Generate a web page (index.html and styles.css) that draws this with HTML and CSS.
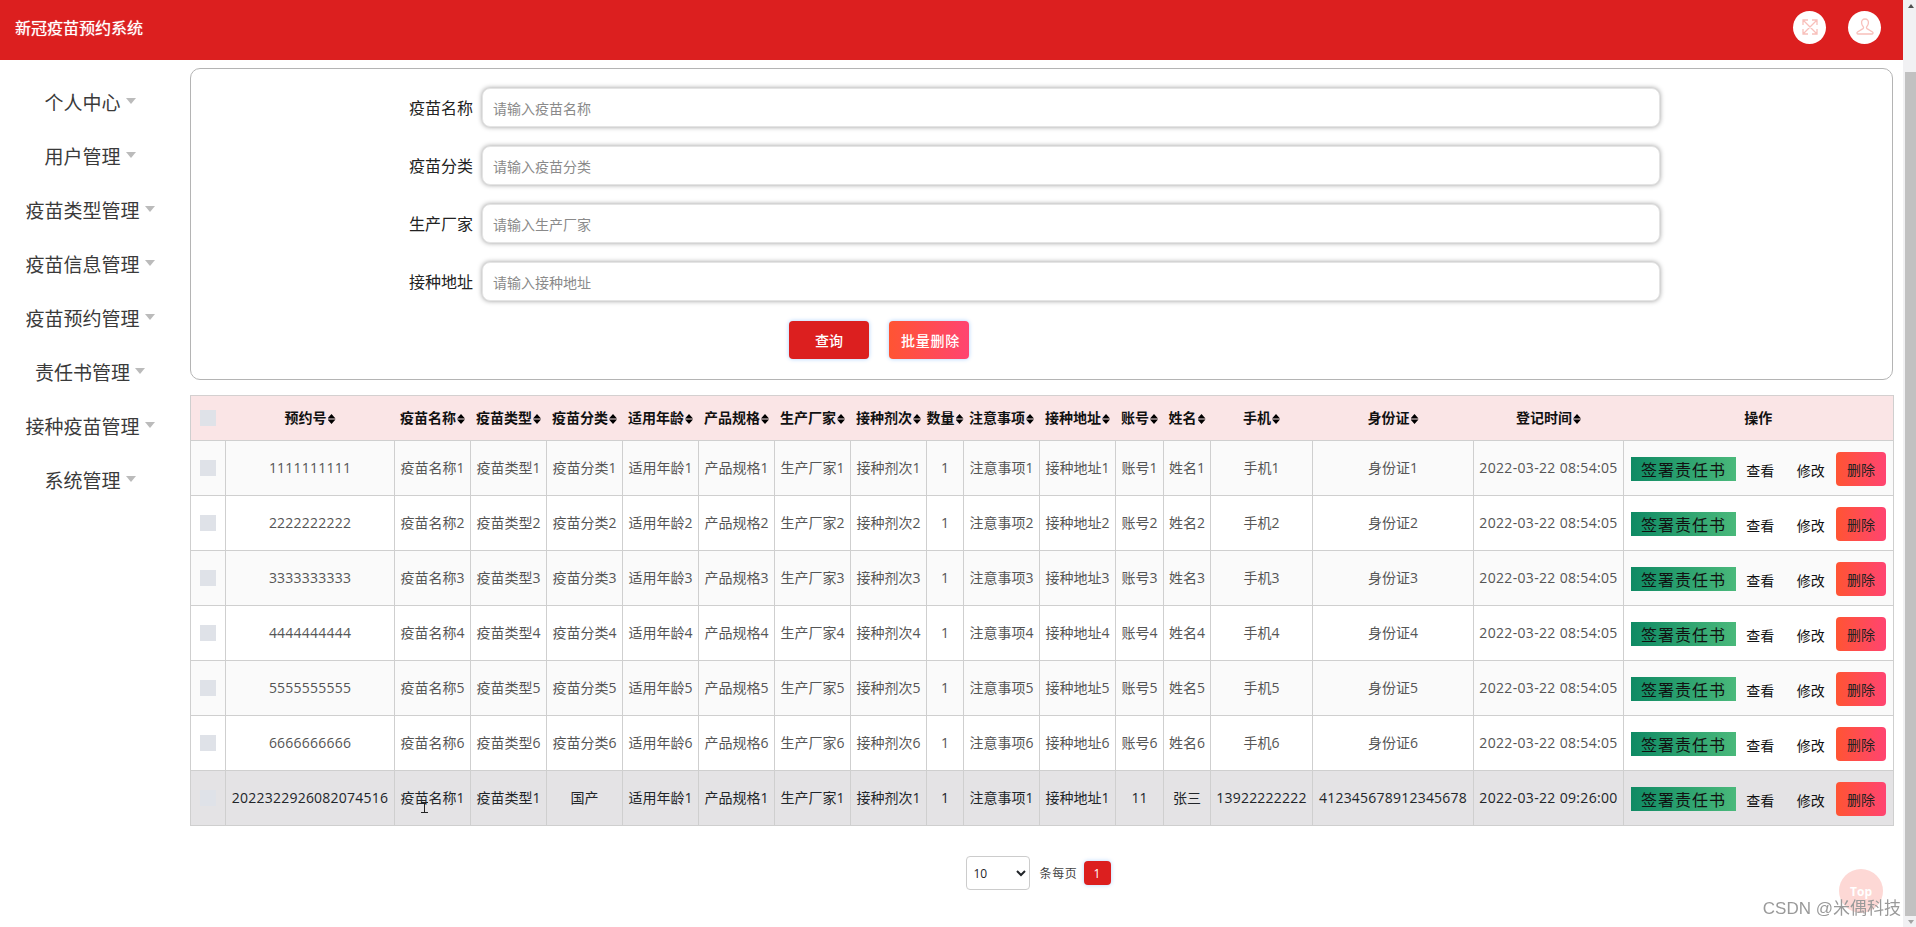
FILE: index.html
```html
<!DOCTYPE html>
<html lang="zh-CN">
<head>
<meta charset="utf-8">
<title>新冠疫苗预约系统</title>
<link rel="stylesheet" href="styles.css">
</head>
<body>
<div class="page">
  <div class="app">
    <header class="topbar">
      <div class="brand">新冠疫苗预约系统</div>
      <div class="top-actions">
        <span class="round-icon">
          <svg viewBox="0 0 16 16" width="16" height="16"><path d="M1 1l14 14M15 1L1 15M1 6V1h5M10 1h5v5M15 10v5h-5M6 15H1v-5"/></svg>
        </span>
        <span class="round-icon">
          <svg viewBox="0 0 18 18" width="18" height="18"><path d="M9 1c-2.4 0-3.6 1.8-3.4 4 .1 1.7.9 3 1.7 3.8.4.5.3 1.4-.3 1.8L1.5 14c-.9.6-.6 2 .6 2h13.8c1.2 0 1.500-1.400.6-2l-5.500-3.400c-.6-.4-.7-1.300-.3-1.800.8-.8 1.600-2.100 1.700-3.800C12.600 2.800 11.400 1 9 1z"/></svg>
        </span>
      </div>
    </header>
    <div class="layout">
      <nav class="sidebar">
        <div class="menu-item">个人中心</div>
        <div class="menu-item">用户管理</div>
        <div class="menu-item">疫苗类型管理</div>
        <div class="menu-item">疫苗信息管理</div>
        <div class="menu-item">疫苗预约管理</div>
        <div class="menu-item">责任书管理</div>
        <div class="menu-item">接种疫苗管理</div>
        <div class="menu-item">系统管理</div>
      </nav>
      <main class="main">
        <section class="search-box">
          <div class="form-row"><label class="form-label">疫苗名称</label><input class="form-input" placeholder="请输入疫苗名称"></div>
          <div class="form-row"><label class="form-label">疫苗分类</label><input class="form-input" placeholder="请输入疫苗分类"></div>
          <div class="form-row"><label class="form-label">生产厂家</label><input class="form-input" placeholder="请输入生产厂家"></div>
          <div class="form-row"><label class="form-label">接种地址</label><input class="form-input" placeholder="请输入接种地址"></div>
          <div class="form-buttons">
            <button class="btn-search">查询</button>
            <button class="btn-batch">批量删除</button>
          </div>
        </section>
        <div class="table-wrap">
          <table class="data-table">
            <colgroup>
              <col class="c-check"><col class="c-no"><col class="c-std"><col class="c-std"><col class="c-std"><col class="c-std"><col class="c-std"><col class="c-std"><col class="c-std"><col class="c-qty"><col class="c-std"><col class="c-std"><col class="c-acct"><col class="c-name"><col class="c-phone"><col class="c-id"><col class="c-time"><col class="c-ops">
            </colgroup>
            <thead>
              <tr>
                <th><input type="checkbox" class="check"></th>
                <th><span class="sort">预约号</span></th>
                <th><span class="sort">疫苗名称</span></th>
                <th><span class="sort">疫苗类型</span></th>
                <th><span class="sort">疫苗分类</span></th>
                <th><span class="sort">适用年龄</span></th>
                <th><span class="sort">产品规格</span></th>
                <th><span class="sort">生产厂家</span></th>
                <th><span class="sort">接种剂次</span></th>
                <th><span class="sort">数量</span></th>
                <th><span class="sort">注意事项</span></th>
                <th><span class="sort">接种地址</span></th>
                <th><span class="sort">账号</span></th>
                <th><span class="sort">姓名</span></th>
                <th><span class="sort">手机</span></th>
                <th><span class="sort">身份证</span></th>
                <th><span class="sort">登记时间</span></th>
                <th>操作</th>
              </tr>
            </thead>
            <tbody>
              <tr>
                <td><input type="checkbox" class="check"></td>
                <td class="num">1111111111</td><td>疫苗名称1</td><td>疫苗类型1</td><td>疫苗分类1</td><td>适用年龄1</td><td>产品规格1</td><td>生产厂家1</td><td>接种剂次1</td><td>1</td><td>注意事项1</td><td>接种地址1</td><td>账号1</td><td>姓名1</td><td>手机1</td><td>身份证1</td><td class="date">2022-03-22 08:54:05</td>
                <td class="ops-cell"><div class="ops"><button class="btn-sign">签署责任书</button><button class="btn-link">查看</button><button class="btn-link">修改</button><button class="btn-del">删除</button></div></td>
              </tr>
              <tr>
                <td><input type="checkbox" class="check"></td>
                <td class="num">2222222222</td><td>疫苗名称2</td><td>疫苗类型2</td><td>疫苗分类2</td><td>适用年龄2</td><td>产品规格2</td><td>生产厂家2</td><td>接种剂次2</td><td>1</td><td>注意事项2</td><td>接种地址2</td><td>账号2</td><td>姓名2</td><td>手机2</td><td>身份证2</td><td class="date">2022-03-22 08:54:05</td>
                <td class="ops-cell"><div class="ops"><button class="btn-sign">签署责任书</button><button class="btn-link">查看</button><button class="btn-link">修改</button><button class="btn-del">删除</button></div></td>
              </tr>
              <tr>
                <td><input type="checkbox" class="check"></td>
                <td class="num">3333333333</td><td>疫苗名称3</td><td>疫苗类型3</td><td>疫苗分类3</td><td>适用年龄3</td><td>产品规格3</td><td>生产厂家3</td><td>接种剂次3</td><td>1</td><td>注意事项3</td><td>接种地址3</td><td>账号3</td><td>姓名3</td><td>手机3</td><td>身份证3</td><td class="date">2022-03-22 08:54:05</td>
                <td class="ops-cell"><div class="ops"><button class="btn-sign">签署责任书</button><button class="btn-link">查看</button><button class="btn-link">修改</button><button class="btn-del">删除</button></div></td>
              </tr>
              <tr>
                <td><input type="checkbox" class="check"></td>
                <td class="num">4444444444</td><td>疫苗名称4</td><td>疫苗类型4</td><td>疫苗分类4</td><td>适用年龄4</td><td>产品规格4</td><td>生产厂家4</td><td>接种剂次4</td><td>1</td><td>注意事项4</td><td>接种地址4</td><td>账号4</td><td>姓名4</td><td>手机4</td><td>身份证4</td><td class="date">2022-03-22 08:54:05</td>
                <td class="ops-cell"><div class="ops"><button class="btn-sign">签署责任书</button><button class="btn-link">查看</button><button class="btn-link">修改</button><button class="btn-del">删除</button></div></td>
              </tr>
              <tr>
                <td><input type="checkbox" class="check"></td>
                <td class="num">5555555555</td><td>疫苗名称5</td><td>疫苗类型5</td><td>疫苗分类5</td><td>适用年龄5</td><td>产品规格5</td><td>生产厂家5</td><td>接种剂次5</td><td>1</td><td>注意事项5</td><td>接种地址5</td><td>账号5</td><td>姓名5</td><td>手机5</td><td>身份证5</td><td class="date">2022-03-22 08:54:05</td>
                <td class="ops-cell"><div class="ops"><button class="btn-sign">签署责任书</button><button class="btn-link">查看</button><button class="btn-link">修改</button><button class="btn-del">删除</button></div></td>
              </tr>
              <tr>
                <td><input type="checkbox" class="check"></td>
                <td class="num">6666666666</td><td>疫苗名称6</td><td>疫苗类型6</td><td>疫苗分类6</td><td>适用年龄6</td><td>产品规格6</td><td>生产厂家6</td><td>接种剂次6</td><td>1</td><td>注意事项6</td><td>接种地址6</td><td>账号6</td><td>姓名6</td><td>手机6</td><td>身份证6</td><td class="date">2022-03-22 08:54:05</td>
                <td class="ops-cell"><div class="ops"><button class="btn-sign">签署责任书</button><button class="btn-link">查看</button><button class="btn-link">修改</button><button class="btn-del">删除</button></div></td>
              </tr>
              <tr class="row-hover">
                <td><input type="checkbox" class="check"></td>
                <td class="num">2022322926082074516</td><td>疫苗名称1</td><td>疫苗类型1</td><td>国产</td><td>适用年龄1</td><td>产品规格1</td><td>生产厂家1</td><td>接种剂次1</td><td>1</td><td>注意事项1</td><td>接种地址1</td><td>11</td><td>张三</td><td class="num">13922222222</td><td class="num">412345678912345678</td><td class="date">2022-03-22 09:26:00</td>
                <td class="ops-cell"><div class="ops"><button class="btn-sign">签署责任书</button><button class="btn-link">查看</button><button class="btn-link">修改</button><button class="btn-del">删除</button></div></td>
              </tr>
            </tbody>
          </table>
        </div>
        <div class="pager">
          <select class="page-size"><option>10</option><option>20</option><option>50</option></select>
          <span class="page-text">条每页</span>
          <button class="page-num">1</button>
        </div>
      </main>
    </div>
  </div>
  <div class="scrollbar">
    <div class="sb-arrow"><span class="tri-up"></span></div>
    <div class="sb-gap"></div>
    <div class="sb-thumb"></div>
    <div class="sb-arrow"><span class="tri-down"></span></div>
  </div>
</div>
<svg class="cursor" viewBox="0 0 7 11" width="7" height="11"><path d="M0 .5h7M0 10.500h7M3.500.5v10"/></svg>
<div class="to-top">Top</div>
<div class="watermark">CSDN @米偶科技</div>
</body>
</html>
```
FILE: styles.css
```css
* { box-sizing: border-box; }
html, body { height: 100%; }
body {
  margin: 0;
  overflow: hidden;
  background: #fff;
  color: #212529;
  font-family: "Open Sans", "Noto Sans CJK SC", sans-serif;
  font-size: 14px;
}
button, input, select { font-family: inherit; }

.page { display: flex; height: 927px; }
.app { flex: 1; min-width: 0; display: flex; flex-direction: column; }

.topbar {
  height: 60px;
  flex: none;
  background: #dc1f1f;
  display: flex;
  align-items: center;
  justify-content: space-between;
  padding: 0 22px 6px 15px;
}
.brand { color: #fff; font-size: 16px; text-shadow: 0 0 1px rgba(255, 255, 255, .8); }
.top-actions { display: flex; gap: 22px; }
.round-icon {
  width: 33px;
  height: 33px;
  border-radius: 50%;
  background: #fff;
  display: flex;
  align-items: center;
  justify-content: center;
}
.round-icon svg { fill: none; stroke: #f8c0bb; stroke-width: 1.3; }

.layout { flex: 1; display: flex; min-height: 0; }
.sidebar { width: 180px; flex: none; padding-top: 15px; }
.menu-item {
  height: 54px;
  display: flex;
  align-items: center;
  justify-content: center;
  padding-bottom: 1px;
  font-size: 19px;
  color: #3a3a3a;
}
.menu-item::after {
  content: "";
  margin-left: 5px;
  margin-top: -2px;
  border-style: solid;
  border-width: 6px 5.5px 0;
  border-color: #bbb transparent transparent;
}

.main { flex: 1; min-width: 0; margin: 8px 10px 0; }
.search-box {
  height: 312px;
  border: 1px solid #b4b4b4;
  border-radius: 10px;
  padding: 19px 232px 0 218px;
  display: flex;
  flex-direction: column;
  gap: 19px;
}
.form-row { display: flex; align-items: center; gap: 9px; }
.form-label { width: 64px; flex: none; font-size: 16px; color: #222; white-space: nowrap; padding-bottom: 2px; }
.form-input {
  flex: 1;
  height: 39px;
  border: 1px solid #e4e4e4;
  border-radius: 8px;
  padding: 2px 10px 0;
  font-size: 14px;
  outline: none;
  box-shadow: 0 0 5px rgba(0, 0, 0, .4);
}
.form-input::placeholder { color: #8a8a8a; opacity: 1; }
.form-buttons { display: flex; gap: 20px; margin: 1px 0 0 380px; }
.btn-search, .btn-batch {
  width: 80px;
  height: 38px;
  border: 0;
  border-radius: 4px;
  color: #fff;
  font-size: 14px;
  font-weight: 500;
  padding: 0;
  white-space: nowrap;
  box-shadow: 0 0 4px rgba(0, 123, 255, .35);
}
.btn-search { background: #dc1f1f; }
.btn-batch { background: linear-gradient(90deg, #ff5433, #ff4471); letter-spacing: .7px; padding-left: 3px; }

.table-wrap { margin-top: 15px; }
.data-table {
  width: 1703px;
  table-layout: fixed;
  border-collapse: collapse;
  text-align: center;
  white-space: nowrap;
}
.c-check { width: 35px; }
.c-no { width: 169px; }
.c-std { width: 76px; }
.c-qty { width: 37px; }
.c-acct { width: 48px; }
.c-name { width: 47px; }
.c-phone { width: 102px; }
.c-id { width: 161px; }
.c-time { width: 150px; }
.c-ops { width: 270px; }
.data-table th {
  height: 45px;
  padding: 0 0 2px;
  background: #fae5e6;
  border-top: 1px solid #d4d0d0;
  border-bottom: 1px solid #cfcfcf;
  color: #111;
  font-weight: 700;
}
.data-table th:first-child { border-left: 1px solid #cfcfcf; padding: 0; }
.data-table th:last-child { border-right: 1px solid #cfcfcf; }
.data-table td {
  height: 55px;
  padding: 0 0 2px;
  border: 1px solid #cfcfcf;
  color: #555;
}
.data-table td:first-child { padding: 0; }
.data-table td.ops-cell { padding: 2px 0 0; }
.data-table td.num { letter-spacing: .22px; }
.data-table td.date { letter-spacing: .33px; }
.data-table tbody tr:nth-child(odd) td { background: #fafafa; }
.data-table tbody tr:nth-child(even) td { background: #fff; }
.data-table tbody tr.row-hover td { background: #e4e3e5; color: #212529; }
.sort::after {
  content: "";
  display: inline-block;
  width: 8px;
  height: 10px;
  margin-left: 1px;
  vertical-align: -1px;
  background: #000;
  clip-path: polygon(50% 0, 100% 44%, 0 44%, 50% 0, 50% 100%, 100% 56%, 0 56%, 50% 100%);
}
.check {
  appearance: none;
  display: block;
  width: 16px;
  height: 16px;
  margin: 0 auto;
  background: #dfe2e8;
  border: 0;
}

.ops { display: flex; align-items: center; padding-left: 7px; }
.ops button { border: 0; padding: 0; white-space: nowrap; }
.btn-sign {
  width: 105px;
  height: 24px;
  margin-right: -1px;
  background: linear-gradient(90deg, #0f8a64, #4ab97b);
  color: #111;
  font-size: 16px;
  letter-spacing: 1px;
}
.btn-link {
  width: 50.5px;
  height: 34px;
  background: transparent;
  color: #111;
  font-size: 14px;
  padding-top: 2px !important;
}
.btn-del {
  width: 50px;
  height: 34px;
  border-radius: 4px;
  background: linear-gradient(90deg, #ff5433, #ff4471);
  color: #222;
  font-size: 14px;
}

.pager {
  margin-top: 30px;
  display: flex;
  align-items: center;
  justify-content: center;
  padding-right: 6px;
}
.page-size {
  width: 64px;
  height: 34px;
  background: #fff;
  border: 1px solid #ccc;
  border-radius: 4px;
  font-size: 12px;
  color: #212529;
  padding: 0 0 0 2px;
}
.page-text { margin: 0 6px 0 9px; font-size: 12px; letter-spacing: .7px; color: #444; }
.page-num {
  width: 27px;
  height: 24px;
  border: 0;
  border-radius: 4px;
  padding: 0;
  background: #dc1f1f;
  color: #fff;
  font-size: 12px;
  box-shadow: 0 0 4px rgba(0, 123, 255, .3);
}

.scrollbar {
  width: 13px;
  flex: none;
  background: #f1f1f3;
  display: flex;
  flex-direction: column;
  align-items: flex-end;
}
.sb-arrow { width: 11px; height: 11px; flex: none; display: flex; align-items: center; justify-content: center; }
.tri-up, .tri-down { border-style: solid; border-color: transparent; }
.tri-up { border-width: 0 3.5px 4px; border-bottom-color: #505050; }
.tri-down { border-width: 4px 3.5px 0; border-top-color: #a3a3a3; }
.sb-gap { height: 61px; flex: none; }
.sb-thumb { flex: 1; width: 11px; background: #c1c1c1; }

.to-top {
  position: fixed;
  left: 1839px;
  top: 869px;
  width: 44px;
  height: 44px;
  border-radius: 50%;
  background: #fdd8d5;
  color: #fff;
  font-size: 12px;
  font-weight: 700;
  display: flex;
  align-items: center;
  justify-content: center;
}
.watermark {
  position: fixed;
  right: 15px;
  top: 896px;
  font-family: "Liberation Sans", "Noto Sans CJK SC", sans-serif;
  font-size: 17px;
  line-height: 26px;
  color: #9a9a9a;
  white-space: nowrap;
}
.cursor {
  position: fixed;
  left: 421px;
  top: 802px;
  fill: none;
  stroke: #222;
  stroke-width: 1;
}
```
